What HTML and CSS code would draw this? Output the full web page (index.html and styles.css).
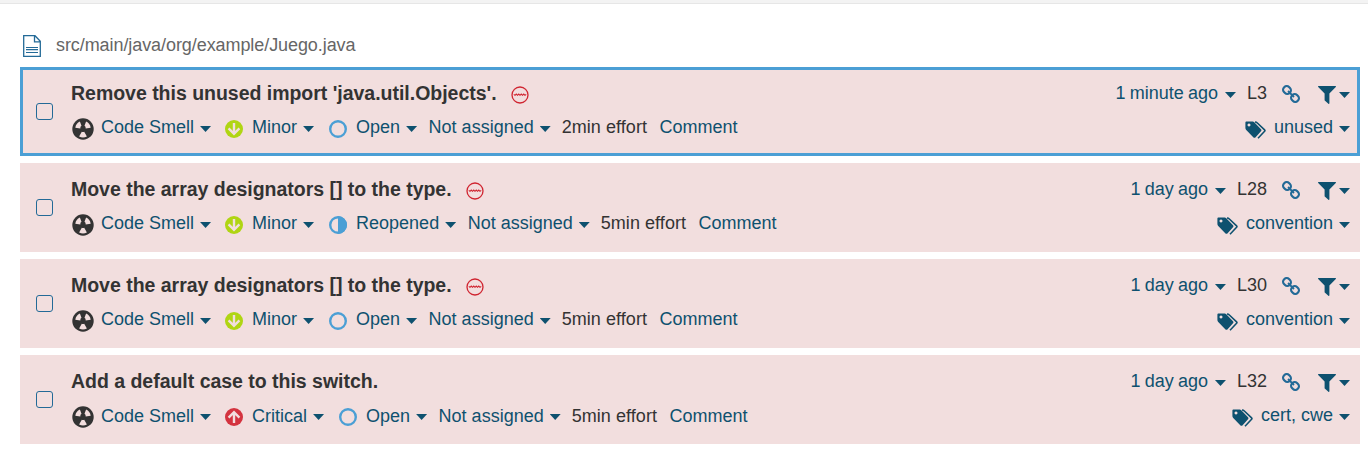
FILE: index.html
```html
<!DOCTYPE html>
<html lang="en">
<head>
<meta charset="utf-8">
<title>Issues</title>
<link rel="stylesheet" href="styles.css">
</head>
<body>
<svg class="defs" width="0" height="0">
  <symbol id="smell" viewBox="0 0 22 22"><circle cx="11" cy="11" r="10.7" fill="#333"/><path class="cut" d="M9.500 7.800L7.900 3.600A8.200 8.200 0 0 0 3.300 9.700L8.300 10.400a2.800 2.800 0 0 1 1.200-2.600zM12.500 7.800L14.100 3.600A8.200 8.200 0 0 1 18.700 9.700L13.700 10.400a2.800 2.800 0 0 0-1.200-2.600zM9.800 13.700L7.100 18.500a8.500 8.500 0 0 0 7.800 0L12.200 13.700a2.500 2.500 0 0 1-2.400 0z"/></symbol>
  <symbol id="minor" viewBox="0 0 18 18"><circle cx="9" cy="9" r="9" fill="#b0d513"/><path d="M9 3v10.500M3.600 8.400L9 13.800 14.400 8.400" fill="none" stroke="#f2dede" stroke-width="2.400"/></symbol>
  <symbol id="critical" viewBox="0 0 18 18"><circle cx="9" cy="9" r="9" fill="#d4333f"/><path d="M9 15v-10.500M3.600 9.600L9 4.200 14.400 9.600" fill="none" stroke="#f2dede" stroke-width="2.400"/></symbol>
  <symbol id="open" viewBox="0 0 18 18"><circle cx="9" cy="9" r="7.800" fill="none" stroke="#4b9fd5" stroke-width="2.400"/></symbol>
  <symbol id="reopened" viewBox="0 0 18 18"><circle cx="9" cy="9" r="7.800" fill="none" stroke="#4b9fd5" stroke-width="2.400"/><path d="M9 0a9 9 0 0 1 0 18z" fill="#4b9fd5"/></symbol>
  <symbol id="wave" viewBox="0 0 18 18"><circle cx="9" cy="9" r="8" fill="none" stroke="#d02430" stroke-width="1.300"/><path d="M2.800 8.300l1.200 1 1.250-1.300 1.250 1.300 1.250-1.300L9 9.300l1.250-1.300 1.250 1.300 1.250-1.300L14 9.300l1.200-1" fill="none" stroke="#d02430" stroke-width="1.100"/></symbol>
  <symbol id="link" viewBox="0 0 18 18"><g fill="none" stroke="#236a97" stroke-width="2.200"><rect x="-3.900" y="-3.500" width="7.800" height="7" rx="3.200" transform="translate(5 5) rotate(45)"/><rect x="-3.900" y="-3.500" width="7.800" height="7" rx="3.200" transform="translate(13 13) rotate(45)"/><path d="M6 6l6 6" stroke-width="1.800"/></g></symbol>
  <symbol id="filter" viewBox="0 0 18 18"><path d="M.6 0h16.800c.6 0 .8.700.4 1.100L11.400 7.600v9.700c0 .6-.6.900-1 .5L7 14.800a1 1 0 0 1-.4-.8V7.600L.2 1.100C-.2.700 0 0 .6 0z" fill="#0e516f"/></symbol>
  <symbol id="tags" viewBox="0 0 21 18"><path fill-rule="evenodd" d="M1.300.5h5.800c.8 0 1.900.4 2.400 1l6.500 6.800c.6.600.6 1.300 0 1.900l-5.600 6.200c-.6.600-1.300.6-1.900 0L1.500 9.300C.8 8.700.4 7.700.4 6.800V1.400C.4.900.8.500 1.300.5zM4 2.500a1.500 1.500 0 1 0 .01 0z" fill="#0e516f"/><path d="M10 1c1.100 0 1.900.5 2.600 1.200l7 6.700c.5.500.5.900 0 1.400l-6.600 6.900" fill="none" stroke="#0e516f" stroke-width="1.600"/></symbol>
  <symbol id="file" viewBox="0 0 18 22"><g fill="none" stroke="#236a97" stroke-width="1.300"><path d="M.7.700h11.300l5.300 5.600v15H.7zM11.500.8v6h5.800"/><path d="M3 12.500h12M3 14.600h12M3 17.500h12" stroke-width="1.200"/></g></symbol>
</svg>
<main class="page">
  <header class="path"><svg class="file"><use href="#file"/></svg><span>src/main/java/org/example/Juego.java</span></header>
  <div class="issues" id="issues"></div>
</main>
<script src="app.js"></script>
</body>
</html>
```
FILE: styles.css
```css
* { box-sizing: border-box; }
body { margin: 0; background: #fff; font: 18px/22px "Liberation Sans", Arial, sans-serif; color: #333; }
.defs { display: block; height: 0; }
.cut { fill: #f2dede; }
.page { height: 466px; border-top: 3px solid #f3f3f3; padding: 0 8px 0 20px; overflow: hidden; box-shadow: inset 0 1px #e6e6e6; }
.path { height: 64px; display: flex; padding: 31px 0 0 3px; color: #666; line-height: 22px; letter-spacing: -0.075px; }
.file { width: 18px; height: 22px; margin: 1px 15px 0 0; }
.issues { display: flex; flex-direction: column; gap: 7px; }
.issue { height: 89px; background: #f2dede; border: 3px solid #f2dede; display: flex; padding: 0 7px 0 13px; }
.selected { border-color: #4b9fd5; }
.check { width: 17px; height: 17px; border: 1px solid #236a97; border-radius: 3px; margin: 33px 18px 0 0; }
.body { flex: 1; padding-top: 12px; min-width: 0; }
.line { display: flex; justify-content: space-between; height: 34px; white-space: nowrap; }
.issue:last-child .line + .line .left { padding-top: 1px; }
.issue:last-child .line + .line .icon { margin-top: 3px; }
.issue:last-child .line + .line .smell { margin-top: 1px; }
.issue:last-child .line + .line .tags { margin-top: 5px; }
.issue:last-child .line + .line .left .caret { margin-top: 9px; }
.left, .right { display: flex; }
.title { font-size: 19.500px; font-weight: bold; letter-spacing: -0.02px; }
.link { color: #0e516f; }
.caret { width: 11px; height: 6px; background: #0e516f; clip-path: polygon(0 0, 100% 0, 50% 100%); margin: 10px 0 0 6px; }
.icon { width: 18px; height: 18px; margin: 4px 9px 0 0; }
.wave { margin: 4px 0 0 14px; }
.smell { width: 22px; height: 22px; margin: 2px 7px 0 1px; }
.item { display: flex; margin-right: 11px; }
.item.wide { margin-right: 14px; }
.item.wide + .item.wide { margin-right: 15px; }
.item.status { margin-right: 11.500px; }
.item.effort { margin-right: 12.500px; letter-spacing: 0.06px; }
.age { word-spacing: -0.8px; }
.age + .caret { margin-left: 7px; }
.lineno { margin: 0 15px 0 11px; }
.chain { margin: 3px 18px 0 0; }
.filter { margin: 4px 0 0; }
.filter + .caret { margin: 10px 0 0 3px; }
.tags { width: 21px; height: 18px; margin: 5px 8px 0 0; }
```
FILE: app.js
```js
const issues = [
  ["Remove this unused import 'java.util.Objects'.", true, "Minor", "Open", "2min", "1 minute ago", "L3", "unused"],
  ["Move the array designators [] to the type.", true, "Minor", "Reopened", "5min", "1 day ago", "L28", "convention"],
  ["Move the array designators [] to the type.", true, "Minor", "Open", "5min", "1 day ago", "L30", "convention"],
  ["Add a default case to this switch.", false, "Critical", "Open", "5min", "1 day ago", "L32", "cert, cwe"]
];
const icon = (id, cls = "") => `<svg class="icon ${cls}"><use href="#${id}"/></svg>`;
const menu = (text, cls = "") => `<span class="link ${cls}">${text}</span><i class="caret"></i>`;
document.getElementById("issues").innerHTML = issues.map(([title, wave, severity, status, effort, age, line, tag], i) => `
<article class="issue ${i === 0 ? "selected" : ""}"><span class="check"></span><div class="body">
<div class="line"><div class="left"><span class="title">${title}</span>${wave ? icon("wave", "wave") : ""}</div>
<div class="right">${menu(age, "age")}<span class="lineno">${line}</span>${icon("link", "chain")}${icon("filter", "filter")}<i class="caret"></i></div></div>
<div class="line"><div class="left"><span class="item wide">${icon("smell", "smell")}${menu("Code Smell")}</span><span class="item wide">${icon(severity.toLowerCase())}${menu(severity)}</span><span class="item status">${icon(status.toLowerCase())}${menu(status)}</span><span class="item">${menu("Not assigned")}</span><span class="item effort">${effort} effort</span><span class="link">Comment</span></div>
<div class="right">${icon("tags", "tags")}${menu(tag)}</div></div>
</div></article>`).join("");
```
